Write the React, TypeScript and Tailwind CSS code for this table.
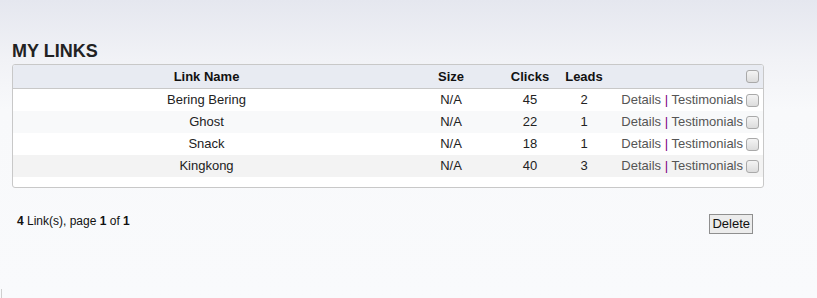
import React from "react";

const rows = [
  { name: "Bering Bering", size: "N/A", clicks: 45, leads: 2, bg: "bg-white" },
  { name: "Ghost", size: "N/A", clicks: 22, leads: 1, bg: "bg-[#f8f9fa]" },
  { name: "Snack", size: "N/A", clicks: 18, leads: 1, bg: "bg-white" },
  { name: "Kingkong", size: "N/A", clicks: 40, leads: 3, bg: "bg-[#f3f3f3]" },
];

function Box() {
  return (
    <span className="inline-block w-[13px] h-[13px] rounded-[3px] border border-[#a9a9a9] bg-[linear-gradient(to_bottom,#f4f4f4,#dcdcdc)] align-middle" />
  );
}

export default function App() {
  return (
    <div
      className="relative w-[817px] h-[298px] overflow-hidden bg-[linear-gradient(to_bottom,#e5e7ef_0px,#f1f2f6_60px,#f8f9fb_110px,#f9fafc_298px)] text-[#111]"
      style={{ fontFamily: '"Liberation Sans", Arial, sans-serif' }}
    >
      <div className="pl-[12px] w-[764px]">
        <h1 className="pt-[41px] text-[18px] leading-[21px] font-bold text-[#222]">MY LINKS</h1>
        <div className="mt-[2px] border border-[#c8c8c8] rounded-[3px] bg-white pb-[10px] overflow-hidden">
          <div className="flex items-center h-[24px] bg-[#e8ebf2] border-b border-[#c8c8c8] text-[13px] font-bold text-[#111]">
            <div className="w-[387px] text-center">Link Name</div>
            <div className="w-[102px] text-center">Size</div>
            <div className="w-[56px] text-center">Clicks</div>
            <div className="w-[52px] text-center">Leads</div>
            <div className="flex-1 flex justify-end pr-[4px]">
              <Box />
            </div>
          </div>
          {rows.map((r) => (
            <div key={r.name} className={`flex items-center h-[22px] text-[13px] text-[#222] ${r.bg}`}>
              <div className="w-[387px] text-center">{r.name}</div>
              <div className="w-[102px] text-center">{r.size}</div>
              <div className="w-[56px] text-center">{r.clicks}</div>
              <div className="w-[52px] text-center">{r.leads}</div>
              <div className="flex-1 flex justify-end items-center pr-[4px] gap-[3px]">
                <span className="text-[#555]">
                  Details <span className="text-[#800080]">|</span> Testimonials
                </span>
                <Box />
              </div>
            </div>
          ))}
        </div>
        <div className="flex items-start justify-between pl-[5px] pr-[11px] mt-[26px]">
          <div className="text-[12px] leading-[14px] text-[#111]">
            <b>4</b> Link(s), page <b>1</b> of <b>1</b>
          </div>
          <button className="h-[20px] px-[2px] border border-[#8f8f8f] bg-[#ececec] text-[13px] leading-[18px] text-[#111]">
            Delete
          </button>
        </div>
      </div>
      <div className="absolute left-[1px] top-[289px] w-[1px] h-[9px] bg-[#cfcfcf]" />
    </div>
  );
}
